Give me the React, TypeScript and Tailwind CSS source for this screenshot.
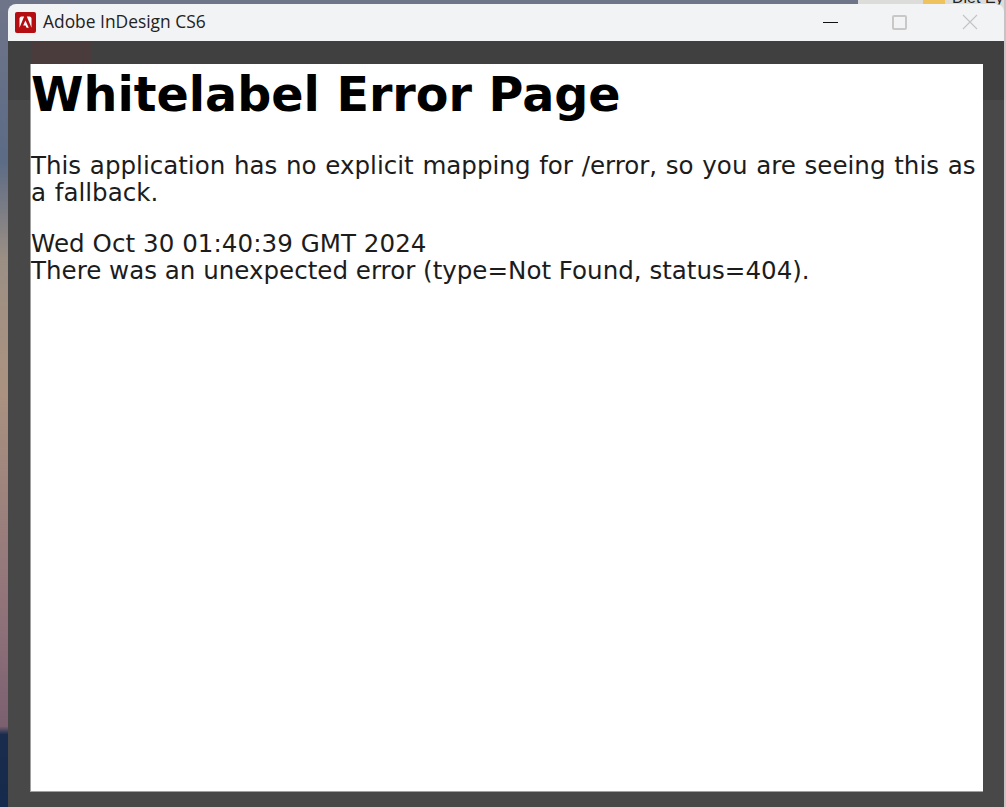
import React from 'react';

const App: React.FC = () => {
  return (
    <div className="relative h-[807px] w-[1006px] overflow-hidden bg-[linear-gradient(180deg,#6f7589_0%,#5c6b86_20%,#9b8f84_32%,#ab9280_48%,#8e7079_78%,#7b6070_90%,#1a2c4d_91%,#152a4c_100%)] pl-2 pr-0.5 pt-1 font-['DejaVu_Sans',sans-serif]">
      {/* bits of the desktop window behind, top right */}
      <div className="absolute right-0 top-0 h-3 w-[148px] overflow-hidden bg-[#dcdcda]">
        <div className="absolute left-[65px] top-0 h-3 w-[22px] bg-[#eec25c]" />
        <span className="absolute left-[94px] top-[-11px] whitespace-nowrap font-['Liberation_Sans',sans-serif] text-[16px] leading-[18px] text-[#222]">Diet Ey</span>
      </div>
      <div className="absolute bottom-0 right-0 top-0 w-0.5 bg-[#c4c4c4]" />

      <div className="relative flex h-[803px] flex-col overflow-hidden rounded-t-lg">
        {/* title bar */}
        <div className="flex h-[37px] shrink-0 items-center bg-[#f2f3f5] pl-[7px]">
          <svg width="21" height="21" viewBox="0 0 21 21" className="mt-[-1px] shrink-0">
            <rect x="0" y="0" width="21" height="21" rx="2" fill="#b40d12" />
            <path d="M6.5 4.5h2.6L4.5 15.8V6.5a2 2 0 0 1 2-2z" fill="#fff" />
            <path d="M11.8 4.5h2.7a2 2 0 0 1 2 2v9.3z" fill="#fff" />
            <path d="M10.4 8.6l3.4 7.2h-2.3l-1-2.4H8.2z" fill="#fff" />
          </svg>
          <span className="ml-[7px] mt-[-2px] font-['Open_Sans',sans-serif] text-[17.4px] leading-none text-[#222]">Adobe InDesign CS6</span>
          <div className="ml-auto mt-[-1px] flex items-center">
            <div className="h-px w-[15px] bg-[#111]" />
            <div className="ml-[54px] h-[15px] w-[15px] rounded-[2px] border-2 border-[#c8c8c8]" />
            <svg width="16" height="16" viewBox="0 0 16 16" className="ml-[55px] mr-[26px]">
              <path d="M1 1l14 14M15 1L1 15" stroke="#c4c4c4" strokeWidth="1.2" fill="none" />
            </svg>
          </div>
        </div>

        {/* dark body */}
        <div className="relative flex min-h-0 flex-1 flex-col bg-[linear-gradient(180deg,#404040_0,#404040_59px,#484848_59px)] pb-[15px] pl-[22px] pr-[21px] pt-[23px]">
          <div className="absolute left-[24px] top-0 h-[23px] w-[60px] bg-[#4a3c3c]" />
          <div className="flex-1 border-b border-l border-[#a0a0a0] bg-white text-[#1c1c1c]">
            <h1 className="mt-[3px] text-[47.6px] font-bold leading-[56px] text-black">Whitelabel Error Page</h1>
            <p className="mt-[29px] text-[24.55px] leading-[27px] [word-spacing:0.9px]">
              This application has no explicit mapping for /error, so you are seeing this as a fallback.
            </p>
            <div className="mt-[24px] text-[24.55px] leading-[27px] tracking-[0.05px]">Wed Oct 30 01:40:39 GMT 2024</div>
            <div className="text-[24.55px] leading-[27px]">There was an unexpected error (type=Not Found, status=404).</div>
          </div>
        </div>
      </div>
    </div>
  );
};

export default App;
